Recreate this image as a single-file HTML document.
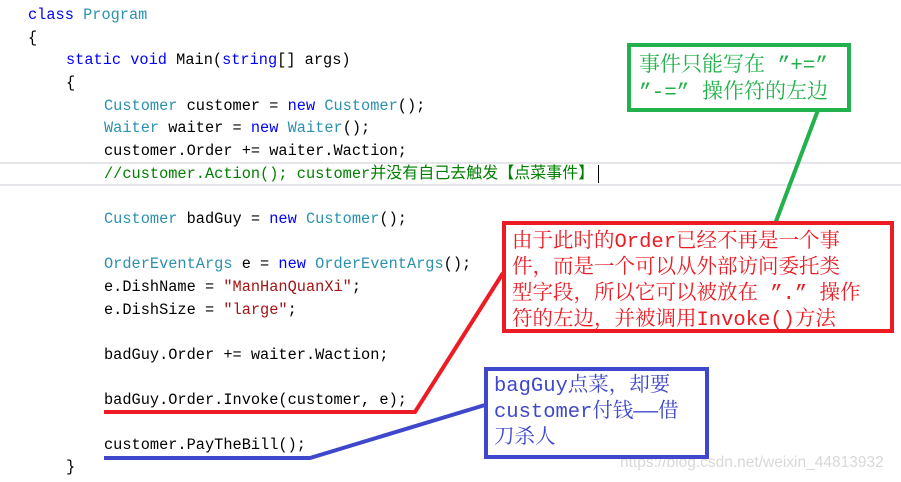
<!DOCTYPE html>
<html><head><meta charset="utf-8"><style>
html,body{margin:0;padding:0;background:#fff;width:901px;height:482px;overflow:hidden;position:relative}
.c{position:absolute;left:0;font-family:"Liberation Mono","Noto Sans CJK SC",monospace;font-size:15.3px;color:#000;white-space:pre;line-height:20px}
.k{color:#0000ff}.t{color:#2b91af}.s{color:#a31515}.g{color:#008000}
.cj{font-size:16px}
.hl{position:absolute;left:0;top:162px;width:901px;height:20px;border-top:2px solid #e6e6ea;border-bottom:2px solid #e6e6ea}
.box{position:absolute;box-sizing:border-box;font-family:"Liberation Mono","Noto Serif CJK SC",serif;font-size:21px;line-height:26px;padding:4px 0 0 6px;background:#fff;white-space:nowrap;overflow:hidden}
</style></head><body>
<div class="hl"></div>
<div class="c" style="top:5px;left:28px"><span class="k">class</span> <span class="t">Program</span></div>
<div class="c" style="top:28px;left:28px">{</div>
<div class="c" style="top:50px;left:66px"><span class="k">static void</span> Main(<span class="k">string</span>[] args)</div>
<div class="c" style="top:73px;left:66px">{</div>
<div class="c" style="top:96px;left:104px"><span class="t">Customer</span> customer = <span class="k">new</span> <span class="t">Customer</span>();</div>
<div class="c" style="top:118px;left:104px"><span class="t">Waiter</span> waiter = <span class="k">new</span> <span class="t">Waiter</span>();</div>
<div class="c" style="top:141px;left:104px">customer.Order += waiter.Waction;</div>
<div class="c" style="top:164px;left:104px"><span class="g">//customer.Action(); customer<span class="cj">并没有自己去触发【点菜事件】</span></span><span style="border-left:1.5px solid #000;margin-left:4px"> </span></div>
<div class="c" style="top:209px;left:104px"><span class="t">Customer</span> badGuy = <span class="k">new</span> <span class="t">Customer</span>();</div>
<div class="c" style="top:254px;left:104px"><span class="t">OrderEventArgs</span> e = <span class="k">new</span> <span class="t">OrderEventArgs</span>();</div>
<div class="c" style="top:277px;left:104px">e.DishName = <span class="s">"ManHanQuanXi"</span>;</div>
<div class="c" style="top:300px;left:104px">e.DishSize = <span class="s">"large"</span>;</div>
<div class="c" style="top:345px;left:104px">badGuy.Order += waiter.Waction;</div>
<div class="c" style="top:390px;left:104px">badGuy.Order.Invoke(customer, e);</div>
<div class="c" style="top:435px;left:104px">customer.PayTheBill();</div>
<div class="c" style="top:457px;left:66px">}</div>
<div style="position:absolute;left:620px;top:454px;font-family:'Liberation Sans',sans-serif;font-size:15.5px;color:#d8d8d8">https://blog.csdn.net/weixin_44813932</div>
<svg style="position:absolute;left:0;top:0" width="901" height="482">
<polyline points="775,224 818,110" fill="none" stroke="#22b14c" stroke-width="4"/>
<polyline points="104,412 415,412 503,273" fill="none" stroke="#ed1c24" stroke-width="4"/>
<polyline points="104,458 310,458 485,405" fill="none" stroke="#3f48cc" stroke-width="4"/>
</svg>
<div class="box" style="left:627px;top:43px;width:224px;height:69px;border:4px solid #22b14c;color:#22b14c;font-size:21px;line-height:27px;padding:6px 0 0 8px">事件只能写在 ”+=”<br>”-=” 操作符的左边</div>
<div class="box" style="left:502px;top:221px;width:392px;height:112px;border:4px solid #ed1c24;color:#ed1c24;padding-top:5px;font-size:20.5px">由于此时的Order已经不再是一个事<br>件，而是一个可以从外部访问委托类<br>型字段，所以它可以被放在 ”.” 操作<br>符的左边，并被调用Invoke()方法</div>
<div class="box" style="left:484px;top:367px;width:225px;height:92px;border:4px solid #3f48cc;color:#3f48cc;padding-top:3px;font-size:20.5px">bagGuy点菜，却要<br>customer付钱——借<br>刀杀人</div>
</body></html>
